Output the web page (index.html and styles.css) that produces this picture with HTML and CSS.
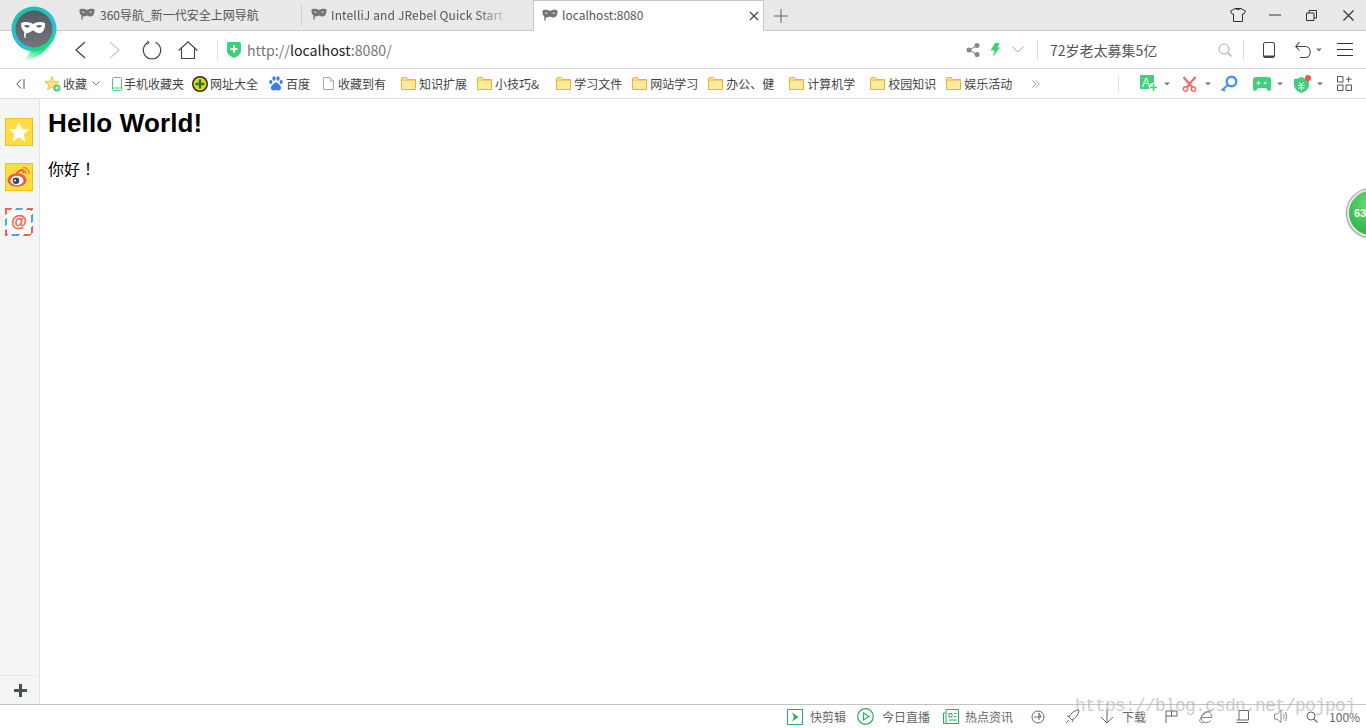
FILE: index.html

```html
<!DOCTYPE html>
<html lang="en">
<head>
    <meta charset="UTF-8">
    <title>localhost:8080</title>
    <link rel="stylesheet" href="styles.css">
</head>
<body>
    <svg class="defs" width="0" height="0">
        <symbol id="mask" viewBox="0 0 16 12">
            <path d="M1.5 1C5 .5 6.5 1.5 8 2 9.5 1.5 11 .5 14.500 1 15.500 1 15.500 2 15.500 3 15.500 6 14 8.500 11 8.500 9.500 8.500 8.800 7.500 8 7.500 7.200 7.500 6.500 8.500 5 8.500 4.500 8.500 4 8.400 3.700 8.300V11.500H2.300V7.500C1 6.500 .5 4.500 .5 3 .5 2 .5 1 1.500 1ZM3 3.800C3.500 5 5 5 5.800 4.300 5.300 3.500 4 3.300 3 3.800ZM13 3.800C12 3.300 10.700 3.500 10.200 4.300 11 5 12.500 5 13 3.800Z" fill="#6f7479" fill-rule="evenodd"/>
        </symbol>
        <symbol id="folder" viewBox="0 0 15 13">
            <path d="M.5 12.500V1.500Q.5 .5 1.500 .5H5.500L7 2.500H14.500V12.500Z" fill="#ffeb9b" stroke="#f0b429"/>
            <path d="M1 3H14" stroke="#f0b429"/>
        </symbol>
        <symbol id="caret" viewBox="0 0 6 4">
            <path d="M0 .5H6L3 3.500Z" fill="#777"/>
        </symbol>
    </svg>

    <!-- logo hangs over tab bar and toolbar -->
    <svg class="logo" width="48" height="58" viewBox="0 0 48 58">
        <defs>
            <linearGradient id="ring" x1="0" y1="0" x2="0.6" y2="1">
                <stop offset="0" stop-color="#16c29a"/>
                <stop offset="0.7" stop-color="#2dbde0"/>
                <stop offset="1" stop-color="#12e07e"/>
            </linearGradient>
            <linearGradient id="tail" x1="0.7" y1="0" x2="0.2" y2="1">
                <stop offset="0" stop-color="#14e07e"/>
                <stop offset="0.5" stop-color="#14e07e" stop-opacity="0.8"/>
                <stop offset="1" stop-color="#14e07e" stop-opacity="0"/>
            </linearGradient>
            <linearGradient id="face" x1="0" y1="0" x2="0" y2="1">
                <stop offset="0" stop-color="#555b62"/>
                <stop offset="1" stop-color="#71767b"/>
            </linearGradient>
        </defs>
        <path d="M24 38 L40 36 C36 47 27 53 11 57 C18 50 21 45 22 38Z" fill="url(#tail)"/>
        <circle cx="23" cy="24" r="22.500" fill="url(#ring)"/>
        <circle cx="23" cy="24" r="18.500" fill="url(#face)"/>
        <path d="M10 18C15 16 19 17 22 19 25 17 30 16 34 18 34.500 24 32 29 27 28 24.500 27.500 23 25.500 22 25.500 21 25.500 19.500 27.500 16.500 28L15.500 28 C14.500 29.500 14.500 31 15 32.500L13.500 33C13 30.500 13 28.500 13.500 27 11 25.500 10 22 10 18ZM13 20.500C14 23 17.500 23 19 21.500 18 19.800 15 19.500 13 20.500ZM31 20.500C29 19.500 26 19.800 25 21.500 26.500 23 30 23 31 20.500Z" fill="#fff" fill-rule="evenodd"/>
    </svg>

    <div class="tabbar">
        <div class="tab tab-first">
            <svg width="16" height="12"><use href="#mask"/></svg>
            <span class="tab-title">360导航_新一代安全上网导航</span>
        </div>
        <div class="tab tab-second">
            <svg width="16" height="12"><use href="#mask"/></svg>
            <span class="tab-title tab-fade">IntelliJ and JRebel Quick Start</span>
        </div>
        <div class="tab tab-active">
            <svg width="16" height="12"><use href="#mask"/></svg>
            <span class="tab-title">localhost:8080</span>
            <svg class="tab-close" width="10" height="10" viewBox="0 0 10 10"><path d="M1 1L9 9M9 1L1 9" stroke="#444" stroke-width="1.200"/></svg>
        </div>
        <svg class="tab-new" width="14" height="14" viewBox="0 0 14 14"><path d="M7 0V14M0 7H14" stroke="#666"/></svg>

        <div class="win-buttons">
            <svg width="16" height="14" viewBox="0 0 16 14"><path d="M5 .5H11L15.500 3 14 6H12.500V13.500H3.500V6H2L.5 3ZM5 .5Q8 3 11 .5" fill="none" stroke="#333"/></svg>
            <svg width="12" height="2" viewBox="0 0 12 2"><path d="M0 1H12" stroke="#333"/></svg>
            <svg width="11" height="11" viewBox="0 0 11 11"><path d="M.5 3H8V10.500H.5ZM3 3V.5H10.500V8H8" fill="none" stroke="#333"/></svg>
            <svg width="11" height="11" viewBox="0 0 11 11"><path d="M.5 .5L10.500 10.500M10.500 .5L.5 10.500" stroke="#333" stroke-width="1.200"/></svg>
        </div>
    </div>

    <div class="toolbar">
        <svg class="nav-back" width="13" height="18" viewBox="0 0 13 18"><path d="M11 1L2 9L11 17" fill="none" stroke="#444" stroke-width="1.300"/></svg>
        <svg class="nav-forward" width="13" height="18" viewBox="0 0 13 18"><path d="M2 1L11 9L2 17" fill="none" stroke="#ccc" stroke-width="1.300"/></svg>
        <svg class="nav-reload" width="20" height="20" viewBox="0 0 20 20"><path d="M6.500 2.200A8.700 8.700 0 1 0 13.500 2.200" fill="none" stroke="#444" stroke-width="1.200"/><path d="M5.500 .5L7 2.300 5.500 4.500" fill="none" stroke="#444"/></svg>
        <svg class="nav-home" width="20" height="18" viewBox="0 0 20 18"><path d="M.7 9.500L10 .8L19.300 9.500M3.500 7.500V17.500H16.500V7.500" fill="none" stroke="#444" stroke-width="1.100"/></svg>
        <span class="vsep nav-sep"></span>
        <svg class="url-shield" width="14" height="16" viewBox="0 0 14 16"><path d="M0 1.500Q0 0 1.500 0H12.500Q14 0 14 1.500V9Q14 13 7 16 0 13 0 9Z" fill="#3fd07a"/><path d="M7 3.500V10.500M3.500 7H10.500" stroke="#fff" stroke-width="2"/></svg>
        <span class="url">http://<b>localhost</b>:8080/</span>

        <svg class="share" width="14" height="14" viewBox="0 0 14 14"><path d="M11 2.500L3 7L11 11.500" stroke="#888" fill="none"/><circle cx="11" cy="2.500" r="2.500" fill="#888"/><circle cx="3" cy="7" r="2.500" fill="#888"/><circle cx="11" cy="11.500" r="2.500" fill="#888"/></svg>
        <svg class="bolt" width="10" height="14" viewBox="0 0 10 14"><path d="M5 0H9.500L7.500 4.500H10L3 14 4.500 7.500H0.500Z" fill="#3fd07a"/></svg>
        <svg class="chev" width="12" height="7" viewBox="0 0 12 7"><path d="M.5 .5L6 6L11.500 .5" fill="none" stroke="#aaa"/></svg>
        <span class="vsep search-sep"></span>
        <span class="search-text">72岁老太募集5亿</span>
        <svg class="search-icon" width="14" height="14" viewBox="0 0 14 14"><circle cx="6" cy="6" r="5" fill="none" stroke="#aaa"/><path d="M9.500 9.500L13.500 13.500" stroke="#aaa" stroke-width="1.200"/></svg>
        <span class="vsep tool-sep"></span>
        <svg class="phone" width="12" height="16" viewBox="0 0 12 16"><rect x=".5" y=".5" width="11" height="15" rx="1.500" fill="none" stroke="#444"/><path d="M1 13.500H11V15H1Z" fill="#444"/></svg>
        <svg class="undo" width="16" height="18" viewBox="0 0 16 18"><path d="M1 5.500H10C17 5.500 17 16.500 10 16.500H5M4.500 1L.8 5.500L4.500 9.500" fill="none" stroke="#444" stroke-width="1.100"/></svg>
        <svg class="undo-caret" width="6" height="4"><use href="#caret"/></svg>
        <svg class="menu" width="16" height="13" viewBox="0 0 16 13"><path d="M0 .5H16M0 6.500H16M0 12.500H16" stroke="#333"/></svg>
    </div>

    <div class="bookmarks">
        <svg class="bm-collapse" width="9" height="10" viewBox="0 0 9 10"><path d="M5 .5L.8 5L5 9.500M8 0V10" fill="none" stroke="#555"/></svg>
        <div class="bm bm-fav">
            <svg width="16" height="16" viewBox="0 0 16 16"><path d="M7 .5L9 5.300 14 5.800 10.300 9 11.500 14 7 11.300 2.500 14 3.700 9 0 5.800 5 5.300Z" fill="#ffe27a" stroke="#e3b23c" stroke-width=".7"/><circle cx="12" cy="12" r="3.500" fill="#3fd07a"/><path d="M12 10V14M10 12H14" stroke="#fff"/></svg>
            <span>收藏</span>
            <svg class="bm-chev" width="8" height="5" viewBox="0 0 8 5"><path d="M.5 .5L4 4L7.500 .5" fill="none" stroke="#777"/></svg>
        </div>
        <div class="bm bm-phone">
            <svg width="10" height="14" viewBox="0 0 10 14"><rect x=".5" y=".5" width="9" height="13" rx="1" fill="#fff" stroke="#3fd07a"/><path d="M1 11H9" stroke="#3fd07a"/></svg>
            <span>手机收藏夹</span>
        </div>
        <div class="bm bm-nav">
            <svg width="16" height="16" viewBox="0 0 16 16"><circle cx="8" cy="8" r="8" fill="#2f2f1a"/><circle cx="8" cy="8" r="6.500" fill="#e9d21f"/><path d="M8 3.500V12.500M3.500 8H12.500" stroke="#1f7d2b" stroke-width="2.400"/></svg>
            <span>网址大全</span>
        </div>
        <div class="bm bm-baidu">
            <svg width="14" height="15" viewBox="0 0 14 15"><g fill="#3b7cf0"><ellipse cx="1.800" cy="6" rx="1.600" ry="2"/><ellipse cx="5" cy="2.500" rx="1.600" ry="2.200"/><ellipse cx="9" cy="2.500" rx="1.600" ry="2.200"/><ellipse cx="12.200" cy="6" rx="1.600" ry="2"/><path d="M7 6.500C9 6.500 9.500 8.500 11 9.500 13 11 12 14.500 9.500 14.500 8.500 14.500 8 14 7 14 6 14 5.500 14.500 4.500 14.500 2 14.500 1 11 3 9.500 4.500 8.500 5 6.500 7 6.500Z"/></g></svg>
            <span>百度</span>
        </div>
        <div class="bm bm-page">
            <svg width="11" height="13" viewBox="0 0 11 13"><path d="M.5 .5H7L10.500 4V12.500H.5ZM7 .5V4H10.500" fill="#fff" stroke="#aaa"/></svg>
            <span>收藏到有</span>
        </div>
        <div class="bm bm-folder"><svg width="15" height="13"><use href="#folder"/></svg><span>知识扩展</span></div>
        <div class="bm bm-folder bm-wider"><svg width="15" height="13"><use href="#folder"/></svg><span>小技巧&amp;</span></div>
        <div class="bm bm-folder"><svg width="15" height="13"><use href="#folder"/></svg><span>学习文件</span></div>
        <div class="bm bm-folder"><svg width="15" height="13"><use href="#folder"/></svg><span>网站学习</span></div>
        <div class="bm bm-folder bm-wide"><svg width="15" height="13"><use href="#folder"/></svg><span>办公、健</span></div>
        <div class="bm bm-folder bm-wide"><svg width="15" height="13"><use href="#folder"/></svg><span>计算机学</span></div>
        <div class="bm bm-folder"><svg width="15" height="13"><use href="#folder"/></svg><span>校园知识</span></div>
        <div class="bm bm-folder"><svg width="15" height="13"><use href="#folder"/></svg><span>娱乐活动</span></div>
        <svg class="bm-more" width="8" height="8" viewBox="0 0 8 8"><path d="M.5 .5L4 4L.5 7.500M3.800 .5L7.300 4L3.800 7.500" fill="none" stroke="#999"/></svg>
        <span class="vsep bm-sep"></span>

        <svg class="ext-a" width="19" height="18" viewBox="0 0 19 18"><rect width="14" height="14" rx="1" fill="#3fd07a"/><text x="2" y="12" font-size="12" font-family="Liberation Sans" fill="#fff">A</text><circle cx="13.500" cy="12.500" r="4.500" fill="#fff"/><path d="M13.500 9V16M10 12.500H17" stroke="#3fd07a" stroke-width="1.600"/></svg>
        <svg class="ext-caret" width="6" height="4"><use href="#caret"/></svg>
        <svg class="ext-cut" width="15" height="16" viewBox="0 0 15 16"><path d="M1.500 1L10.500 11.500M13.500 1L4.500 11.500" stroke="#f46a6a" stroke-width="2.200"/><circle cx="3.500" cy="13" r="2.200" fill="#fff" stroke="#f46a6a" stroke-width="1.400"/><circle cx="11.500" cy="13" r="2.200" fill="#fff" stroke="#f46a6a" stroke-width="1.400"/></svg>
        <svg class="ext-caret" width="6" height="4"><use href="#caret"/></svg>
        <svg class="ext-key" width="18" height="17" viewBox="0 0 18 17"><circle cx="11.500" cy="6.500" r="4.800" fill="none" stroke="#4a90f5" stroke-width="2.400"/><path d="M8 10L1.500 15.500M3 14L5 16" fill="none" stroke="#4a90f5" stroke-width="2"/></svg>
        <svg class="ext-game" width="18" height="14" viewBox="0 0 18 14"><path d="M3 0H15Q18 0 18 3V12Q18 14 16 14 14.500 14 13 11H5Q3.500 14 2 14 0 14 0 12V3Q0 0 3 0Z" fill="#3fd07a"/><path d="M3.500 6H7.500M5.500 4V8" stroke="#fff" stroke-width="1.200"/><circle cx="12" cy="6" r="1.300" fill="#fff"/></svg>
        <svg class="ext-caret" width="6" height="4"><use href="#caret"/></svg>
        <svg class="ext-shield" width="18" height="18" viewBox="0 0 18 18"><path d="M0 4Q4 4 7.500 2 11 4 15 4V10Q15 15 7.500 18 0 15 0 10Z" fill="#3fd07a"/><path d="M5 7L7.500 10 10 7M4.500 10.500H10.500M4.500 13H10.500M7.500 10V15.500" fill="none" stroke="#fff"/><circle cx="14" cy="3" r="3" fill="#f4544f"/></svg>
        <svg class="ext-caret" width="6" height="4"><use href="#caret"/></svg>
        <svg class="ext-apps" width="15" height="15" viewBox="0 0 15 15"><path d="M.5 .5H6V6H.5ZM.5 9H6V14.500H.5ZM9 9H14.500V14.500H9ZM11.700 .5V6M9 3.200H14.500" fill="none" stroke="#555"/></svg>
    </div>

    <div class="main">
        <div class="sidebar">
            <div class="side-btn side-star">
                <svg width="20" height="20" viewBox="0 0 20 20"><path d="M10 0L13 7 20 7.500 14.700 12.200 16.300 19.500 10 15.500 3.700 19.500 5.300 12.200 0 7.500 7 7Z" fill="#fff"/></svg>
            </div>
            <div class="side-btn side-weibo">
                <svg width="24" height="22" viewBox="0 0 24 22"><ellipse cx="10" cy="14" rx="9.500" ry="6.800" fill="#f4544f"/><path d="M9.500 7.500C13 3 17 2.500 16.500 7" fill="none" stroke="#f4544f" stroke-width="2"/><ellipse cx="10" cy="14.500" rx="6.500" ry="4.700" fill="#fff"/><circle cx="9" cy="14.800" r="3.300" fill="#444"/><circle cx="8" cy="14.500" r="1" fill="#fff"/><path d="M16 1.500A6 6 0 0 1 22 8M16 4.500A3 3 0 0 1 19 8" fill="none" stroke="#f0803c" stroke-width="1.400"/></svg>
            </div>
            <div class="side-btn side-mail"><span>@</span></div>
            <div class="side-foot">
                <svg width="13" height="13" viewBox="0 0 13 13"><path d="M6.500 0V13M0 6.500H13" stroke="#4a5056" stroke-width="3"/></svg>
            </div>
        </div>
        <div class="content">
            <h1>Hello World!</h1>
            <p>你好！</p>
        </div>
    </div>

    <div class="statusbar">
        <div class="st st-clip">
            <svg width="16" height="16" viewBox="0 0 16 16"><rect x=".5" y=".5" width="15" height="15" fill="#fff" stroke="#22b35e"/><path d="M5 3.500L11.500 8 5 12.500 7 8Z" fill="#22b35e"/></svg>
            <span>快剪辑</span>
        </div>
        <div class="st st-live">
            <svg width="17" height="17" viewBox="0 0 17 17"><circle cx="8.500" cy="8.500" r="7.800" fill="#fff" stroke="#22b35e" stroke-width="1.200"/><path d="M6.500 5L12 8.500 6.500 12Z" fill="none" stroke="#22b35e" stroke-width="1.200"/></svg>
            <span>今日直播</span>
        </div>
        <div class="st st-news">
            <svg width="16" height="16" viewBox="0 0 16 16"><path d="M3 .5H15.500V14.500H.5V4H3ZM3 4V14.500M6 4.500H9V8H6ZM11 4.500H13.500M11 7.500H13.500M6 11H13.500" fill="#fff" stroke="#22b35e"/></svg>
            <span>热点资讯</span>
        </div>
        <svg class="st-ico st-speed" width="14" height="14" viewBox="0 0 14 14"><circle cx="7" cy="7" r="6" fill="none" stroke="#666"/><path d="M3 7H10L8 3V10" fill="none" stroke="#666"/></svg>
        <svg class="st-ico st-rocket" width="15" height="15" viewBox="0 0 15 15"><path d="M14 1C9 1.500 6 4 4 8L7 11C11 9 13.500 6 14 1ZM4.500 7.500L2 7M7.500 10.500L8 13M4 11L1 14" fill="none" stroke="#666"/></svg>
        <svg class="st-ico st-down" width="14" height="15" viewBox="0 0 14 15"><path d="M7 0V14M1 8L7 14 13 8" fill="none" stroke="#666"/></svg>
        <span class="st-dl">下载</span>
        <svg class="st-ico st-flag" width="13" height="13" viewBox="0 0 13 13"><path d="M1 13V1H12V6H1M6.500 1V6" fill="none" stroke="#666"/></svg>
        <svg class="st-ico st-ie" width="15" height="14" viewBox="0 0 15 14"><path d="M3 7.500H13C13 3 9.500 1 6.500 2 4 3 2 6 2.500 9.500 3.500 13 9 14 12 10.500M13 .8C10 .5 3 3.500 .8 10 .3 13 3 13.500 5.500 12" fill="none" stroke="#888"/></svg>
        <svg class="st-ico st-win" width="13" height="13" viewBox="0 0 13 13"><path d="M3 .5H12.500V10H.5M3 .5V10M.5 12.500H12.500" fill="none" stroke="#666"/></svg>
        <svg class="st-ico st-vol" width="15" height="13" viewBox="0 0 15 13"><path d="M.5 4H3L7 .5V12.500L3 9H.5ZM9.500 4Q11 6.500 9.500 9M11.500 2Q14 6.500 11.500 11" fill="none" stroke="#888"/></svg>
        <svg class="st-ico st-zoom" width="12" height="12" viewBox="0 0 12 12"><circle cx="5" cy="5" r="4" fill="none" stroke="#666"/><path d="M8 8L11.500 11.500" stroke="#666" stroke-width="1.200"/></svg>
        <span class="st-pct">100%</span>
    </div>

    <!-- floating speed ball, clipped by the window edge -->
    <div class="ball"><span>63</span></div>
    <div class="watermark">https://blog.csdn.net/pojpoj</div>
</body>
</html>
```

FILE: styles.css

```css
/* Basic Styles */
html, body {
    margin: 0;
    padding: 0;
    height: 100%;
    overflow: hidden;
}

body {
    display: flex;
    flex-direction: column;
    position: relative;
    background-color: white;
    font-family: "Noto Sans CJK SC", "Noto Sans", sans-serif;
    font-size: 12px;
    color: #444;
}

svg {
    flex: none;
    display: block;
}

.defs {
    position: absolute;
}

.logo {
    position: absolute;
    left: 11px;
    top: 5px;
    z-index: 2;
}

.vsep {
    flex: none;
    width: 1px;
    background-color: #ddd;
}

/* Tabs */
.tabbar {
    flex: none;
    display: flex;
    align-items: flex-start;
    height: 30px;
    padding-left: 70px;
    background-color: #e9e9e9;
    border-bottom: 1px solid #c9c9c9;
}

.tab {
    display: flex;
    align-items: center;
    box-sizing: border-box;
    height: 30px;
    padding: 0 0 2px 9px;
    color: #555;
}

.tab svg {
    margin-right: 4px;
}

.tab-first {
    width: 232px;
    position: relative;
}

.tab-first svg {
    margin-right: 5px;
}

.tab-first::after {
    content: "";
    position: absolute;
    right: 0;
    top: 4px;
    bottom: 4px;
    width: 1px;
    background-color: #ccc;
}

.tab-second {
    width: 231px;
}

.tab-fade {
    letter-spacing: 0.13px;
    -webkit-mask-image: linear-gradient(to right, black 85%, rgba(0, 0, 0, 0.25));
    mask-image: linear-gradient(to right, black 85%, rgba(0, 0, 0, 0.25));
}

.tab-active {
    width: 231px;
    height: 31px;
    padding-left: 8px;
    padding-bottom: 3px;
    background-color: white;
    border: 1px solid #c9c9c9;
    border-bottom: none;
}

.tab-close {
    margin: 3px 7px 0 auto;
}

.tab-new {
    margin: 9px 0 0 10px;
}

.win-buttons {
    display: flex;
    align-items: center;
    height: 30px;
    margin-left: auto;
}

.win-buttons svg:nth-child(1) { margin-right: 23px; }
.win-buttons svg:nth-child(2) { margin-right: 25px; }
.win-buttons svg:nth-child(3) { margin-right: 26px; }
.win-buttons svg:nth-child(4) { margin-right: 12px; }

/* Address bar */
.toolbar {
    flex: none;
    display: flex;
    align-items: center;
    height: 37px;
    background-color: white;
    border-bottom: 1px solid #ddd;
}

.nav-back { margin-left: 74px; }
.nav-forward { margin-left: 21px; }
.nav-reload { margin-left: 21px; }
.nav-home { margin-left: 16px; }

.nav-sep {
    height: 20px;
    margin-left: 19px;
}

.url-shield { margin-left: 9px; }

.url {
    margin-left: 6px;
    font-size: 14.200px;
    color: #777;
}

.url b {
    font-weight: normal;
    color: #222;
}

.share { margin-left: auto; }
.bolt { margin-left: 10px; }
.chev { margin-left: 12px; }

.search-sep {
    height: 20px;
    margin-left: 13px;
}

.search-text {
    width: 168px;
    margin-left: 12px;
    font-size: 14px;
    color: #555;
}

.tool-sep {
    height: 20px;
    margin-left: 11px;
}

.phone { margin-left: 19px; }
.undo { margin-left: 20px; }
.undo-caret { margin-left: 5px; }
.menu { margin: 0 13px 0 15px; }

/* Bookmarks */
.bookmarks {
    flex: none;
    display: flex;
    align-items: center;
    height: 29px;
    background-color: white;
    border-bottom: 1px solid #ddd;
}

.bm {
    display: flex;
    align-items: center;
    margin-right: 10px;
    line-height: 16px;
    color: #444;
}

.bm span {
    white-space: nowrap;
}

.bm-collapse { margin: 0 20px 0 16px; }
.bm-fav svg:first-child { margin-right: 2px; }
.bm-chev { margin-left: 5px; }
.bm-fav { margin-right: 12px; }
.bm-phone svg { margin-right: 2px; }
.bm-phone { margin-right: 8px; }
.bm-nav svg { margin-right: 2px; }
.bm-nav { margin-right: 11px; }
.bm-baidu svg { margin-right: 3px; }
.bm-baidu { margin-right: 13px; }
.bm-page svg { margin-right: 4px; }
.bm-page { margin-right: 15px; }
.bm-folder svg { margin-right: 3px; }
.bm-wide { margin-right: 15px; }
.bm-wider { margin-right: 17px; }

.bm-more { margin-left: 10px; }

.bm-sep {
    height: 16px;
    margin-left: 78px;
}

.ext-a { margin-left: 21px; }
.ext-caret { margin-left: 6px; }
.ext-a + .ext-caret { margin-left: 5px; }
.ext-cut { margin-left: 12px; }
.ext-cut + .ext-caret { margin-left: 8px; }
.ext-key { margin-left: 9px; }
.ext-game { margin-left: 15px; }
.ext-shield { margin-left: 11px; }
.ext-shield + .ext-caret { margin-left: 5px; }
.ext-apps { margin-left: 14px; }

/* Page area */
.main {
    flex: 1;
    display: flex;
    min-height: 0;
}

.sidebar {
    flex: none;
    display: flex;
    flex-direction: column;
    align-items: center;
    gap: 17px;
    box-sizing: border-box;
    width: 40px;
    padding: 19px 1px 0 0;
    background-color: #f4f6f6;
    border-right: 1px solid #e4e4e4;
}

.side-btn {
    display: flex;
    align-items: center;
    justify-content: center;
    box-sizing: border-box;
    width: 28px;
    height: 28px;
}

.side-star, .side-weibo {
    background-color: #ffdc40;
    border: 1px solid #f5bf1e;
}

/* airmail style edge, the white span covers the middle */
.side-mail {
    padding: 2px;
    background: repeating-linear-gradient(135deg, #f4604f 0 5px, white 5px 8px, #4aa8f0 8px 13px, white 13px 16px);
}

.side-mail span {
    flex: 1;
    align-self: stretch;
    background-color: white;
    text-align: center;
    font-family: "Liberation Sans", sans-serif;
    font-size: 16px;
    line-height: 24px;
    font-weight: bold;
    color: #f4604f;
    -webkit-text-stroke: 0.3px #f4604f;
}

.side-foot {
    display: flex;
    align-items: center;
    justify-content: center;
    align-self: stretch;
    height: 28px;
    margin: auto -1px 0 0;
    padding-left: 1px;
    border-top: 1px solid #e8e8e8;
}

.content {
    flex: 1;
    padding-left: 8px;
    color: black;
}

.content h1 {
    margin: 8px 0 0;
    font-family: "Liberation Sans", Arial, sans-serif;
    font-size: 26px;
    line-height: 32px;
    font-weight: bold;
    letter-spacing: 0.15px;
}

.content p {
    margin: 17px 0 0;
    font-family: "Noto Sans CJK TC", sans-serif;
    font-size: 16px;
    line-height: 24px;
}

/* Status bar */
.statusbar {
    flex: none;
    display: flex;
    align-items: center;
    justify-content: flex-start;
    box-sizing: border-box;
    height: 24px;
    padding-left: 787px;
    background-color: white;
    border-top: 1px solid #c4c4c4;
    color: #666;
}

.st {
    display: flex;
    align-items: center;
}

.st-clip svg { margin-right: 7px; }
.st-clip { margin-right: 11px; }
.st-live svg { margin-right: 8px; }
.st-live { margin-right: 13px; }
.st-news svg { margin-right: 6px; }
.st-speed { margin-left: 18px; }
.st-rocket { margin-left: 20px; }
.st-down { margin-left: 20px; }
.st-dl { margin-left: 8px; }
.st-flag { margin-left: 19px; }
.st-ie { margin-left: 21px; }
.st-win { margin-left: 22px; }
.st-vol { margin-left: 25px; }
.st-zoom { margin-left: 17px; }
.st-pct { margin-left: 11px; }

.ball {
    position: absolute;
    left: 1347px;
    top: 189px;
    display: flex;
    align-items: center;
    box-sizing: border-box;
    width: 48px;
    height: 48px;
    padding-left: 5px;
    border-radius: 50%;
    background: radial-gradient(circle at 50% 30%, #6fe07c, #2fb64c 75%);
    border: 2px solid #e4e4e4;
    box-shadow: 0 0 0 1px #9a9a9a, 0 1px 3px rgba(0, 0, 0, 0.4);
    font-family: "Liberation Sans", sans-serif;
    font-size: 11px;
    font-weight: bold;
    color: white;
}

.watermark {
    position: absolute;
    left: 1075px;
    top: 696px;
    font-family: "Liberation Mono", monospace;
    font-size: 18px;
    letter-spacing: -0.8px;
    white-space: nowrap;
    color: rgba(170, 170, 170, 0.6);
}
```
